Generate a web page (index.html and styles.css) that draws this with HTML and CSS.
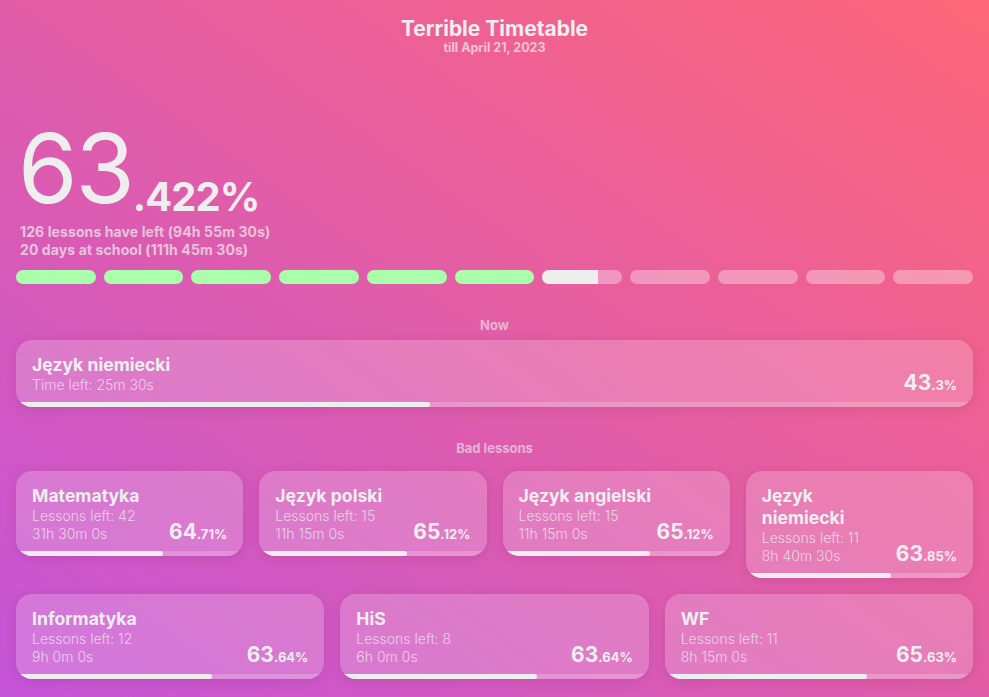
FILE: index.html
```html
<!DOCTYPE html>
<html lang="pl">
<head>
<meta charset="utf-8">
<title>Terrible Timetable</title>
<link rel="stylesheet" href="styles.css">
</head>
<body>
<div class="page">
  <header class="header">
    <h1 class="title">Terrible Timetable</h1>
    <div class="subtitle">till April 21, 2023</div>
  </header>

  <section class="hero">
    <div class="big"><span class="int">63</span><span class="dec">.422%</span></div>
    <div class="stats">
      <div class="stat">126 lessons have left (94h 55m 30s)</div>
      <div class="stat">20 days at school (111h 45m 30s)</div>
    </div>
  </section>

  <div class="segments">
    <div class="seg done"></div>
    <div class="seg done"></div>
    <div class="seg done"></div>
    <div class="seg done"></div>
    <div class="seg done"></div>
    <div class="seg done"></div>
    <div class="seg"><div class="seg-fill" style="width:70%"></div></div>
    <div class="seg"></div>
    <div class="seg"></div>
    <div class="seg"></div>
    <div class="seg"></div>
  </div>

  <div class="label label-now">Now</div>
  <div class="card card-now">
    <div class="card-body">
      <div class="card-info">
        <div class="card-title">Język niemiecki</div>
        <div class="card-line">Time left: 25m 30s</div>
      </div>
      <div class="pct"><span class="pct-int">43</span><span class="pct-dec">.3%</span></div>
    </div>
    <div class="bar"><div class="bar-fill" style="width:43.3%"></div></div>
  </div>

  <div class="label label-bad">Bad lessons</div>
  <div class="lessons">
    <div class="card lesson">
      <div class="card-body">
        <div class="card-info">
          <div class="card-title">Matematyka</div>
          <div class="card-line">Lessons left: 42</div>
          <div class="card-line">31h 30m 0s</div>
        </div>
        <div class="pct"><span class="pct-int">64</span><span class="pct-dec">.71%</span></div>
      </div>
      <div class="bar"><div class="bar-fill" style="width:64.71%"></div></div>
    </div>
    <div class="card lesson">
      <div class="card-body">
        <div class="card-info">
          <div class="card-title">Język polski</div>
          <div class="card-line">Lessons left: 15</div>
          <div class="card-line">11h 15m 0s</div>
        </div>
        <div class="pct"><span class="pct-int">65</span><span class="pct-dec">.12%</span></div>
      </div>
      <div class="bar"><div class="bar-fill" style="width:65.12%"></div></div>
    </div>
    <div class="card lesson">
      <div class="card-body">
        <div class="card-info">
          <div class="card-title">Język angielski</div>
          <div class="card-line">Lessons left: 15</div>
          <div class="card-line">11h 15m 0s</div>
        </div>
        <div class="pct"><span class="pct-int">65</span><span class="pct-dec">.12%</span></div>
      </div>
      <div class="bar"><div class="bar-fill" style="width:65.12%"></div></div>
    </div>
    <div class="card lesson">
      <div class="card-body">
        <div class="card-info">
          <div class="card-title">Język niemiecki</div>
          <div class="card-line">Lessons left: 11</div>
          <div class="card-line">8h 40m 30s</div>
        </div>
        <div class="pct"><span class="pct-int">63</span><span class="pct-dec">.85%</span></div>
      </div>
      <div class="bar"><div class="bar-fill" style="width:63.85%"></div></div>
    </div>
    <div class="card lesson">
      <div class="card-body">
        <div class="card-info">
          <div class="card-title">Informatyka</div>
          <div class="card-line">Lessons left: 12</div>
          <div class="card-line">9h 0m 0s</div>
        </div>
        <div class="pct"><span class="pct-int">63</span><span class="pct-dec">.64%</span></div>
      </div>
      <div class="bar"><div class="bar-fill" style="width:63.64%"></div></div>
    </div>
    <div class="card lesson">
      <div class="card-body">
        <div class="card-info">
          <div class="card-title">HiS</div>
          <div class="card-line">Lessons left: 8</div>
          <div class="card-line">6h 0m 0s</div>
        </div>
        <div class="pct"><span class="pct-int">63</span><span class="pct-dec">.64%</span></div>
      </div>
      <div class="bar"><div class="bar-fill" style="width:63.64%"></div></div>
    </div>
    <div class="card lesson">
      <div class="card-body">
        <div class="card-info">
          <div class="card-title">WF</div>
          <div class="card-line">Lessons left: 11</div>
          <div class="card-line">8h 15m 0s</div>
        </div>
        <div class="pct"><span class="pct-int">65</span><span class="pct-dec">.63%</span></div>
      </div>
      <div class="bar"><div class="bar-fill" style="width:65.63%"></div></div>
    </div>
  </div>
</div>
</body>
</html>
```

FILE: styles.css
```css
* { box-sizing: border-box; }

html, body {
  margin: 0;
  padding: 0;
  height: 100%;
}

body {
  font-family: "Inter", "Lato", "Noto Sans", sans-serif;
  color: #eeeeee;
  background: linear-gradient(to top right, #c454d8, #ff6677);
  overflow: hidden;
}

.page {
  padding: 17px 16px 0;
}

.header {
  text-align: center;
}

.title {
  margin: 0;
  font-size: 21px;
  line-height: 24px;
  font-weight: 700;
}

.subtitle {
  font-size: 12.5px;
  line-height: 14px;
  font-weight: 700;
  opacity: 0.7;
}

.hero {
  margin-top: 65px;
  padding-left: 2px;
}

.big {
  font-size: 96px;
  line-height: 1;
  font-weight: 400;
  letter-spacing: -2px;
}

.big .dec {
  font-size: 40px;
  font-weight: 700;
  letter-spacing: -1px;
  vertical-align: -8px;
}

.stats {
  margin-top: 6px;
  padding-left: 2px;
}

.stat {
  font-size: 14px;
  line-height: 18px;
  font-weight: 700;
  letter-spacing: 0.1px;
  opacity: 0.7;
}

.segments {
  display: flex;
  gap: 8px;
  margin-top: 11px;
}

.seg {
  flex: 1 1 0;
  height: 14px;
  border-radius: 7px;
  background: rgba(255, 255, 255, 0.35);
  overflow: hidden;
}

.seg.done {
  background: #aaffaa;
}

.seg-fill {
  height: 100%;
  background: #eeeeee;
}

.label {
  text-align: center;
  font-size: 13px;
  line-height: 16px;
  font-weight: 700;
  opacity: 0.6;
}

.label-now {
  margin-top: 33px;
  margin-bottom: 7px;
}

.label-bad {
  margin-top: 33px;
  margin-bottom: 15px;
}

.card {
  background: rgba(255, 255, 255, 0.2);
  border-radius: 16px;
  overflow: hidden;
  box-shadow: 0 2px 12px rgba(80, 0, 60, 0.12);
}

.card-body {
  display: flex;
  align-items: flex-end;
  padding: 14px 16px 8px;
}

.card-info {
  flex: 1 1 auto;
  min-width: 0;
}

.card-title {
  font-size: 17.6px;
  line-height: 22px;
  font-weight: 700;
}

.card-line {
  font-size: 14px;
  line-height: 18px;
  font-weight: 300;
  opacity: 0.75;
}

.pct {
  flex: none;
  font-weight: 700;
  line-height: 18px;
  white-space: nowrap;
}

.pct-int {
  font-size: 21px;
}

.pct-dec {
  font-size: 13px;
}

.bar {
  height: 5px;
  background: rgba(255, 255, 255, 0.2);
}

.bar-fill {
  height: 100%;
  background: #eeeeee;
  border-radius: 0 3px 3px 0;
}

.lessons {
  display: flex;
  flex-wrap: wrap;
  align-items: flex-start;
  gap: 16px;
}

.lesson {
  flex: 1 1 200px;
}
```
